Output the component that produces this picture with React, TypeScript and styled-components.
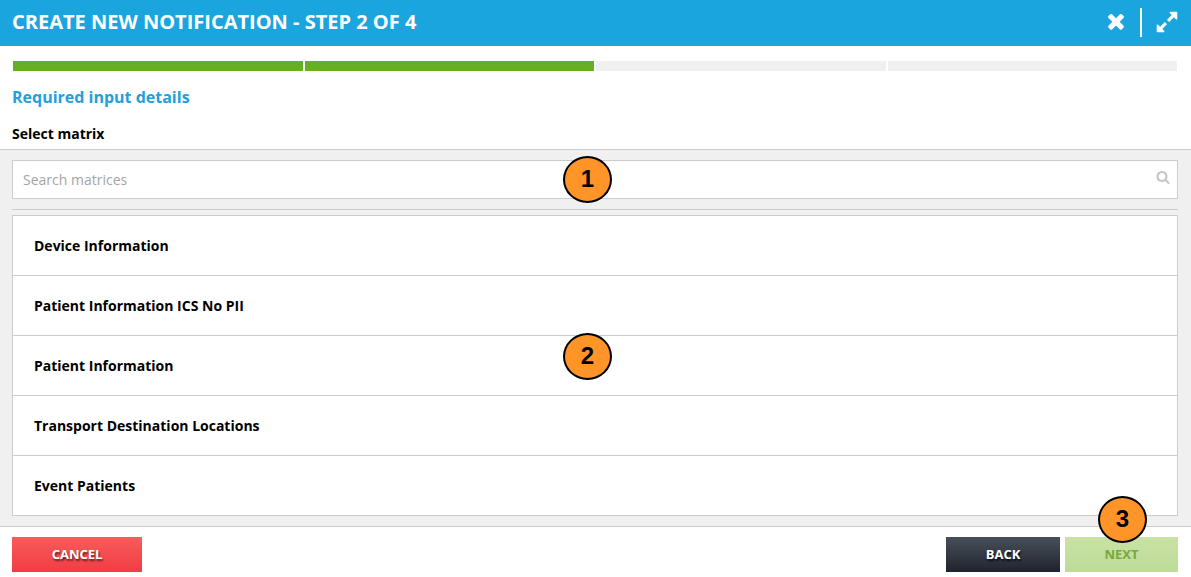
import React from 'react';
import styled, { createGlobalStyle, css } from 'styled-components';

const GlobalStyle = createGlobalStyle`
  *, *::before, *::after { box-sizing: border-box; }
  body {
    margin: 0;
    background: #fff;
    color: #000;
    font-family: "Open Sans", "Noto Sans", sans-serif;
    font-size: 14px;
    line-height: 20px;
  }
  button, input { font-family: inherit; }
`;

const Header = styled.header`
  display: flex;
  align-items: center;
  justify-content: space-between;
  height: 46px;
  padding: 0 12px 2px;
  background: #1ba5de;
  color: #fff;
`;

const Title = styled.h1`
  margin: 0;
  font-size: 20px;
  line-height: 28px;
  font-weight: 700;
`;

const HeaderActions = styled.div`
  display: flex;
  align-items: center;
`;

const IconButton = styled.button`
  display: flex;
  padding: 0;
  border: 0;
  background: none;
  color: inherit;
  cursor: pointer;
`;

const CloseButton = styled(IconButton)`
  padding-bottom: 2px;
`;

const HeaderDivider = styled.span`
  width: 2px;
  height: 29px;
  margin: 0 13px 0 12px;
  background: #fff;
`;

const Progress = styled.div`
  display: flex;
  gap: 2px;
  padding: 15px 14px 0 13px;
`;

const Step = styled.span<{ $done: boolean }>`
  flex: 1;
  height: 10px;
  background: ${({ $done }) => ($done ? '#64b01f' : '#f0f0f0')};
`;

const Intro = styled.div`
  padding: 14px 12px 5px;
`;

const SectionTitle = styled.h2`
  margin: 0 0 15px;
  font-size: 16px;
  line-height: 24px;
  font-weight: 700;
  color: #239fdb;
`;

const FieldLabel = styled.label`
  display: block;
  font-weight: 700;
`;

const Panel = styled.section`
  padding: 10px 13px 10px 12px;
  border-top: 1px solid #ccc;
  border-bottom: 1px solid #ccc;
  background: #f0f0f0;
`;

const SearchBox = styled.div`
  position: relative;
  display: flex;
  align-items: center;
  height: 39px;
  padding-right: 7px;
  border: 1px solid #ccc;
  background: #fff;
  color: #c4c4c4;
`;

const SearchInput = styled.input`
  flex: 1;
  min-width: 0;
  height: 100%;
  padding: 0 10px;
  border: 0;
  outline: 0;
  background: none;
  font-size: 14px;
  color: #000;
  &::placeholder { color: #a4a4a4; opacity: 1; }
`;

const SearchButton = styled(IconButton)`
  padding-bottom: 5px;
`;

const Rule = styled.hr`
  margin: 10px 0 5px;
  border: 0;
  border-top: 1px solid #ccc;
`;

const MatrixList = styled.ul`
  position: relative;
  margin: 0;
  padding: 0;
  list-style: none;
  border: 1px solid #ccc;
  background: #fff;
`;

const MatrixItem = styled.li`
  & + & { border-top: 1px solid #ccc; }
`;

const MatrixButton = styled.button`
  display: block;
  width: 100%;
  height: 59px;
  padding: 0 21px;
  border: 0;
  background: none;
  color: #000;
  font-size: 14px;
  line-height: 20px;
  font-weight: 700;
  text-align: left;
  cursor: pointer;
`;

const Footer = styled.footer`
  display: flex;
  justify-content: space-between;
  padding: 10px 13px 5px 12px;
`;

const FooterGroup = styled.div`
  position: relative;
  display: flex;
  gap: 5px;
`;

const tones = {
  danger: css`
    width: 130px;
    background: linear-gradient(#f75c5c, #f23c44);
    color: #fff;
    text-shadow: 1px 2px 2px rgba(0, 0, 0, 0.6);
  `,
  dark: css`
    width: 114px;
    background: linear-gradient(#475059, #20232d);
    color: #fff;
    text-shadow: 1px 2px 2px rgba(0, 0, 0, 0.8);
  `,
  success: css`
    width: 113px;
    background: linear-gradient(#c8e2a4, #bedb98);
    color: #78a83c;
  `,
};

const Action = styled.button<{ $tone: keyof typeof tones }>`
  height: 35px;
  padding: 0 0 2px;
  border: 0;
  font-size: 13px;
  line-height: 20px;
  font-weight: 700;
  ${({ $tone }) => tones[$tone]}
`;

const Callout = styled.span<{ $top: number; $left?: string; $right?: string }>`
  position: absolute;
  z-index: 1;
  top: ${({ $top }) => $top}px;
  left: ${({ $left }) => $left ?? 'auto'};
  right: ${({ $right }) => $right ?? 'auto'};
  display: flex;
  align-items: center;
  justify-content: center;
  width: 49px;
  height: 47px;
  padding-bottom: 2px;
  border: 2px solid #000;
  border-radius: 50%;
  background: #ff9428;
  color: #000;
  font: 700 24px/24px "Liberation Sans", Arial, sans-serif;
  pointer-events: none;
`;

const Glyph = ({ size, path }: { size: number; path: string }) => (
  <svg width={size} height={size} viewBox="0 0 1792 1792" fill="currentColor" aria-hidden="true">
    <path d={path} />
  </svg>
);

const CLOSE =
  'M1490 1322q0 40-28 68l-136 136q-28 28-68 28t-68-28l-294-294-294 294q-28 28-68 28t-68-28l-136-136q-28-28-28-68t28-68l294-294-294-294q-28-28-28-68t28-68l136-136q28-28 68-28t68 28l294 294 294-294q28-28 68-28t68 28l136 136q28 28 28 68t-28 68l-294 294 294 294q28 28 28 68z';
const EXPAND =
  'M883 1056q0 13-10 23l-332 332 144 144q19 19 19 45t-19 45-45 19h-448q-26 0-45-19t-19-45v-448q0-26 19-45t45-19 45 19l144 144 332-332q10-10 23-10t23 10l114 114q10 10 10 23zm781-864v448q0 26-19 45t-45 19-45-19l-144-144-332 332q-10 10-23 10t-23-10l-114-114q-10-10-10-23t10-23l332-332-144-144q-19-19-19-45t19-45 45-19h448q26 0 45 19t19 45z';
const SEARCH =
  'M1216 832q0-185-131.5-316.5t-316.5-131.5-316.5 131.5-131.5 316.5 131.5 316.5 316.5 131.5 316.5-131.5 131.5-316.5zm512 832q0 52-38 90t-90 38q-54 0-90-38l-343-342q-179 124-399 124-143 0-273.5-55.5t-225-150-150-225-55.5-273.5 55.5-273.5 150-225 225-150 273.5-55.5 273.5 55.5 225 150 150 225 55.5 273.5q0 220-124 399l343 343q37 37 37 90z';

const matrices = [
  'Device Information',
  'Patient Information ICS No PII',
  'Patient Information',
  'Transport Destination Locations',
  'Event Patients',
];

export default function App() {
  return (
    <>
      <GlobalStyle />
      <Header>
        <Title>CREATE NEW NOTIFICATION - STEP 2 OF 4</Title>
        <HeaderActions>
          <CloseButton type="button" aria-label="Close">
            <Glyph size={24} path={CLOSE} />
          </CloseButton>
          <HeaderDivider />
          <IconButton type="button" aria-label="Expand">
            <Glyph size={24} path={EXPAND} />
          </IconButton>
        </HeaderActions>
      </Header>
      <main>
        <Progress>
          {[1, 2, 3, 4].map((step) => (
            <Step key={step} $done={step <= 2} />
          ))}
        </Progress>
        <Intro>
          <SectionTitle>Required input details</SectionTitle>
          <FieldLabel htmlFor="matrix-search">Select matrix</FieldLabel>
        </Intro>
        <Panel>
          <SearchBox>
            <SearchInput id="matrix-search" type="text" placeholder="Search matrices" />
            <SearchButton type="button" aria-label="Search">
              <Glyph size={14} path={SEARCH} />
            </SearchButton>
            <Callout $top={-5} $left="calc(50% - 32px)">1</Callout>
          </SearchBox>
          <Rule />
          <MatrixList>
            {matrices.map((name) => (
              <MatrixItem key={name}>
                <MatrixButton type="button">{name}</MatrixButton>
              </MatrixItem>
            ))}
            <Callout as="li" $top={117} $left="calc(50% - 32px)">2</Callout>
          </MatrixList>
        </Panel>
      </main>
      <Footer>
        <Action type="button" $tone="danger">CANCEL</Action>
        <FooterGroup>
          <Action type="button" $tone="dark">BACK</Action>
          <Action type="button" $tone="success" disabled>NEXT</Action>
          <Callout $top={-41} $right="31px">3</Callout>
        </FooterGroup>
      </Footer>
    </>
  );
}
